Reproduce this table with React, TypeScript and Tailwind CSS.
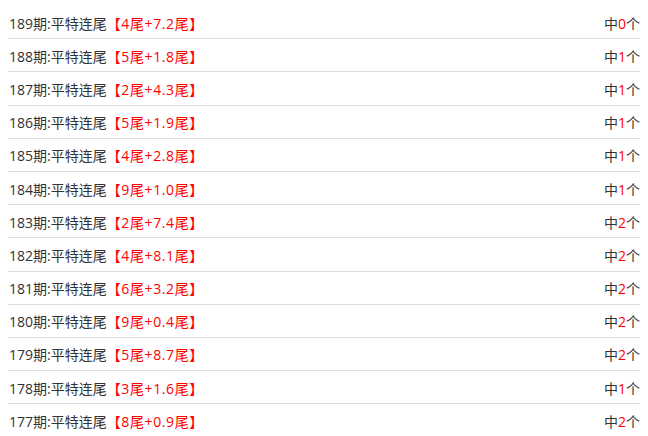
const rows = [
  { no: 189, a: '4', b: '7.2', hit: '0' },
  { no: 188, a: '5', b: '1.8', hit: '1' },
  { no: 187, a: '2', b: '4.3', hit: '1' },
  { no: 186, a: '5', b: '1.9', hit: '1' },
  { no: 185, a: '4', b: '2.8', hit: '1' },
  { no: 184, a: '9', b: '1.0', hit: '1' },
  { no: 183, a: '2', b: '7.4', hit: '2' },
  { no: 182, a: '4', b: '8.1', hit: '2' },
  { no: 181, a: '6', b: '3.2', hit: '2' },
  { no: 180, a: '9', b: '0.4', hit: '2' },
  { no: 179, a: '5', b: '8.7', hit: '2' },
  { no: 178, a: '3', b: '1.6', hit: '1' },
  { no: 177, a: '8', b: '0.9', hit: '2' },
];

export default function App() {
  return (
    <div
      className="w-[648px] h-[436px] overflow-hidden bg-white px-2 pt-[6px] text-[14px] text-[#333]"
      style={{ fontFamily: '"Open Sans", "Noto Sans CJK SC", sans-serif' }}
    >
      {rows.map((r, i) => (
        <div
          key={r.no}
          className={`flex h-[33.2px] items-center justify-between pl-px pt-[2px] ${
            i < rows.length - 1 ? 'border-b border-[#dedede]' : ''
          }`}
        >
          <div>
            {r.no}期:平特连尾
            <span className="text-[#ff0000] tracking-[0.6px]">
              【{r.a}尾+{r.b}尾】
            </span>
          </div>
          <div>
            中<span className="text-[#ff0000]">{r.hit}</span>个
          </div>
        </div>
      ))}
    </div>
  );
}
